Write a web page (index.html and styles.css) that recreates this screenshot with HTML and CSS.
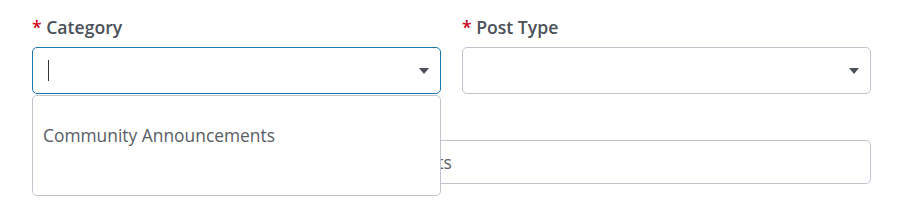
FILE: index.html
```html
<!DOCTYPE html>
<html lang="en">

<head>
    <meta charset="UTF-8">
    <meta name="viewport" content="width=device-width, initial-scale=1.0">
    <title>New Post</title>
    <link rel="stylesheet" href="styles.css">
</head>

<body>

    <form class="post-form">
        <div class="field">
            <label class="field-label"><span class="req">*</span> Category</label>
            <div class="select-wrap">
                <div class="select select-open">
                    <span class="caret"></span>
                    <span class="arrow"></span>
                </div>
                <ul class="options">
                    <li class="option">Community Announcements</li>
                </ul>
            </div>
        </div>

        <div class="field">
            <label class="field-label"><span class="req">*</span> Post Type</label>
            <div class="select-wrap">
                <div class="select">
                    <span class="arrow"></span>
                </div>
            </div>
        </div>

        <div class="field field-wide">
            <label class="field-label"><span class="req">*</span> Title</label>
            <div class="text-input">Write a short headline for your community events</div>
        </div>
    </form>

</body>

</html>
```

FILE: styles.css
```css
html,
body {
    height: 100%;
}

body {
    margin: 0;
    min-height: 214px;
    background-color: #ffffff;
    font-family: "Open Sans", "Noto Sans", Arial, sans-serif;
}

.post-form {
    display: grid;
    grid-template-columns: 409px 409px;
    column-gap: 21px;
    row-gap: 14px;
    padding: 15px 0 40px 32px;
}

.field-wide {
    grid-column: 1 / 3;
}

.field-label {
    display: block;
    font-size: 17.6px;
    font-weight: 600;
    line-height: 24px;
    color: #4b5058;
    margin-bottom: 8px;
}

.req {
    color: #d0021b;
}

.select-wrap {
    position: relative;
}

.select {
    position: relative;
    height: 47px;
    box-sizing: border-box;
    border: 1px solid #c3c3cf;
    border-radius: 5px;
    background-color: #fff;
}

.select-open {
    border-color: #1b78b3;
}

.caret {
    position: absolute;
    left: 15px;
    top: 12px;
    width: 1px;
    height: 21px;
    background-color: #333;
}

.arrow {
    position: absolute;
    right: 11px;
    top: 20px;
    width: 0;
    height: 0;
    border-left: 5px solid transparent;
    border-right: 5px solid transparent;
    border-top: 6px solid #4b5058;
}

.options {
    position: absolute;
    z-index: 2;
    left: 0;
    right: 0;
    top: 48px;
    margin: 0;
    padding: 0;
    list-style: none;
    height: 101px;
    box-sizing: border-box;
    border: 1px solid #c3c3cf;
    border-radius: 5px;
    background-color: #fff;
}

.option {
    padding: 27px 10px 0 10px;
    font-size: 17.4px;
    line-height: 24px;
    color: #595d65;
}

.text-input {
    height: 44px;
    box-sizing: border-box;
    border: 1px solid #c3c3cf;
    border-radius: 5px;
    padding: 0 10px 0 16px;
    font-size: 17.4px;
    line-height: 42px;
    color: #595d65;
    white-space: nowrap;
    overflow: hidden;
}
```
